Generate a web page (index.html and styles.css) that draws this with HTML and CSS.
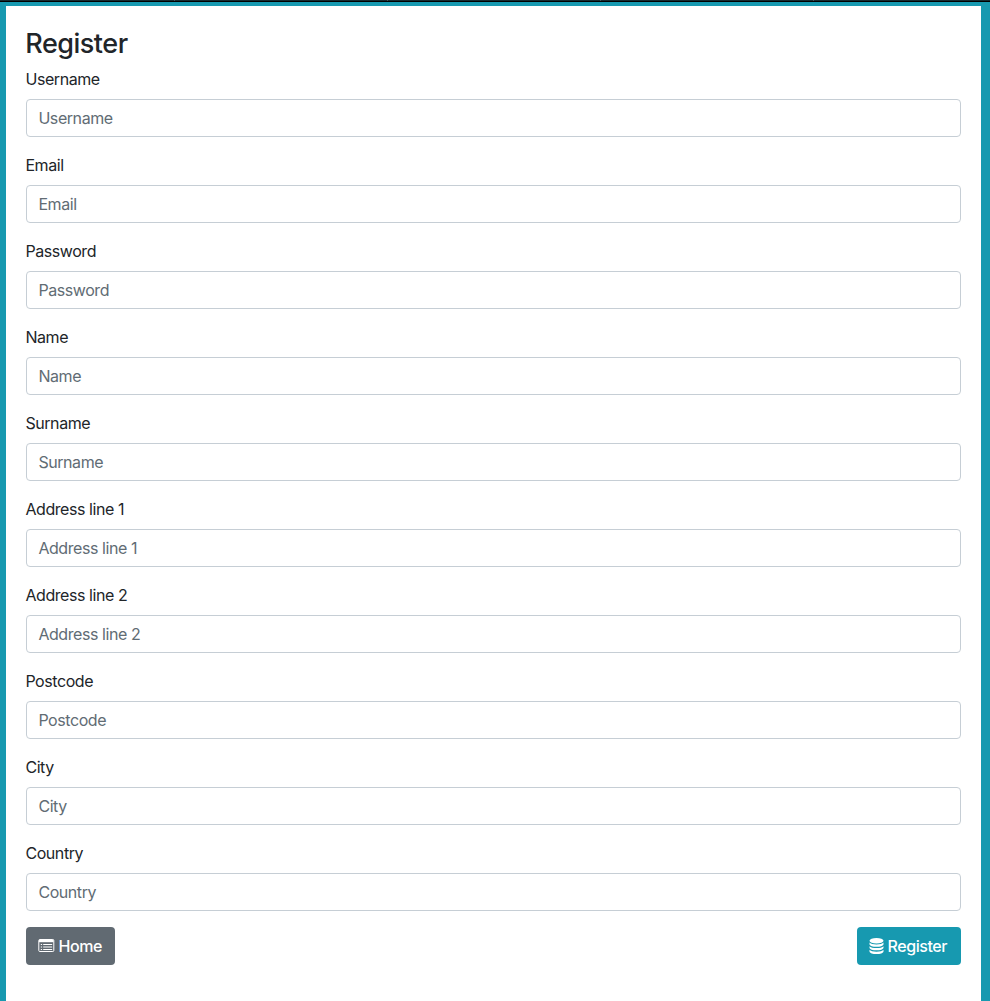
FILE: index.html
```html
<!DOCTYPE html>
<html lang="en">
<head>
<meta charset="utf-8">
<title>Register</title>
<link rel="stylesheet" href="styles.css">
</head>
<body>
<div class="topbar"><i></i><i></i><i></i><i></i></div>
<main class="card">
<h1 class="title">Register</h1>
<form>
<div class="group"><label for="username">Username</label><input id="username" type="text" placeholder="Username"></div>
<div class="group"><label for="email">Email</label><input id="email" type="email" placeholder="Email"></div>
<div class="group"><label for="password">Password</label><input id="password" type="password" placeholder="Password"></div>
<div class="group"><label for="name">Name</label><input id="name" type="text" placeholder="Name"></div>
<div class="group"><label for="surname">Surname</label><input id="surname" type="text" placeholder="Surname"></div>
<div class="group"><label for="address1">Address line 1</label><input id="address1" type="text" placeholder="Address line 1"></div>
<div class="group"><label for="address2">Address line 2</label><input id="address2" type="text" placeholder="Address line 2"></div>
<div class="group"><label for="postcode">Postcode</label><input id="postcode" type="text" placeholder="Postcode"></div>
<div class="group"><label for="city">City</label><input id="city" type="text" placeholder="City"></div>
<div class="group"><label for="country">Country</label><input id="country" type="text" placeholder="Country"></div>
<div class="actions">
<button type="button" class="btn btn-home"><svg width="17" height="16" viewBox="0 0 17 16" fill="none" stroke="#fff"><rect x=".8" y="1.5" width="15" height="12" rx="1"/><path d="M1 3h14.5" stroke-width="2.4"/><path d="M2.8 6.5h1.3M2.8 9h1.3M2.8 11.5h1.3M5.2 6.5h9M5.2 9h9M5.2 11.5h9"/></svg><span>Home</span></button>
<button type="submit" class="btn btn-register"><svg width="16" height="18" viewBox="0 0 16 18" fill="#fff"><ellipse cx="7.5" cy="3.8" rx="7" ry="2.8"/><path d="M.5 5.6c1.6 2.5 12.4 2.5 14 0v1.6c0 3.4-14 3.4-14 0zM.5 9.2c1.6 2.5 12.4 2.5 14 0v1.6c0 3.4-14 3.4-14 0zM.5 12.8c1.6 2.5 12.4 2.5 14 0v1.6c0 3.4-14 3.4-14 0z"/></svg><span>Register</span></button>
</div>
</form>
</main>
</body>
</html>
```
FILE: styles.css
```css
* { box-sizing: border-box; }
body {
  margin: 0;
  height: 1001px;
  overflow: hidden;
  display: flex;
  flex-direction: column;
  background: #1799b0;
  color: #212529;
  font: 400 16px/24px Inter, "Liberation Sans", sans-serif;
  letter-spacing: -0.43px;
}
.topbar {
  height: 2px;
  flex: none;
  display: flex;
  gap: 212px;
  padding-left: 174px;
  background: linear-gradient(#17292e 50%, #000 50%);
}
.topbar i { width: 1px; height: 1px; flex: none; background: #4a5558; }
.card {
  flex: 1;
  margin: 4px 9px 0 6px;
  padding: 20px;
  background: #fff;
}
.title {
  margin: 0 0 7px -0.7px;
  padding-top: 1px;
  font-size: 27px;
  line-height: 33px;
  font-weight: 500;
  letter-spacing: -0.5px;
}
.group { margin-bottom: 16px; }
.group label { display: block; margin: 0 0 8px -0.6px; }
.group input {
  display: block;
  width: 100%;
  height: 38px;
  padding: 6px 11.4px;
  border: 1px solid #c6ced5;
  border-radius: 4px;
  background: #fff;
  font: inherit;
  letter-spacing: inherit;
}
.group input::placeholder { color: #616c74; opacity: 1; }
.actions { display: flex; justify-content: space-between; }
.btn {
  display: flex;
  align-items: center;
  height: 38px;
  padding: 0 12px;
  border: 0;
  border-radius: 4px;
  color: #fff;
  font: inherit;
  font-weight: 500;
  letter-spacing: inherit;
  white-space: nowrap;
}
.btn svg { flex: none; }
.btn-home { width: 89px; gap: 3.5px; background: #616a72; }
.btn-register { width: 104px; gap: 2.5px; background: #1799b0; }
```
